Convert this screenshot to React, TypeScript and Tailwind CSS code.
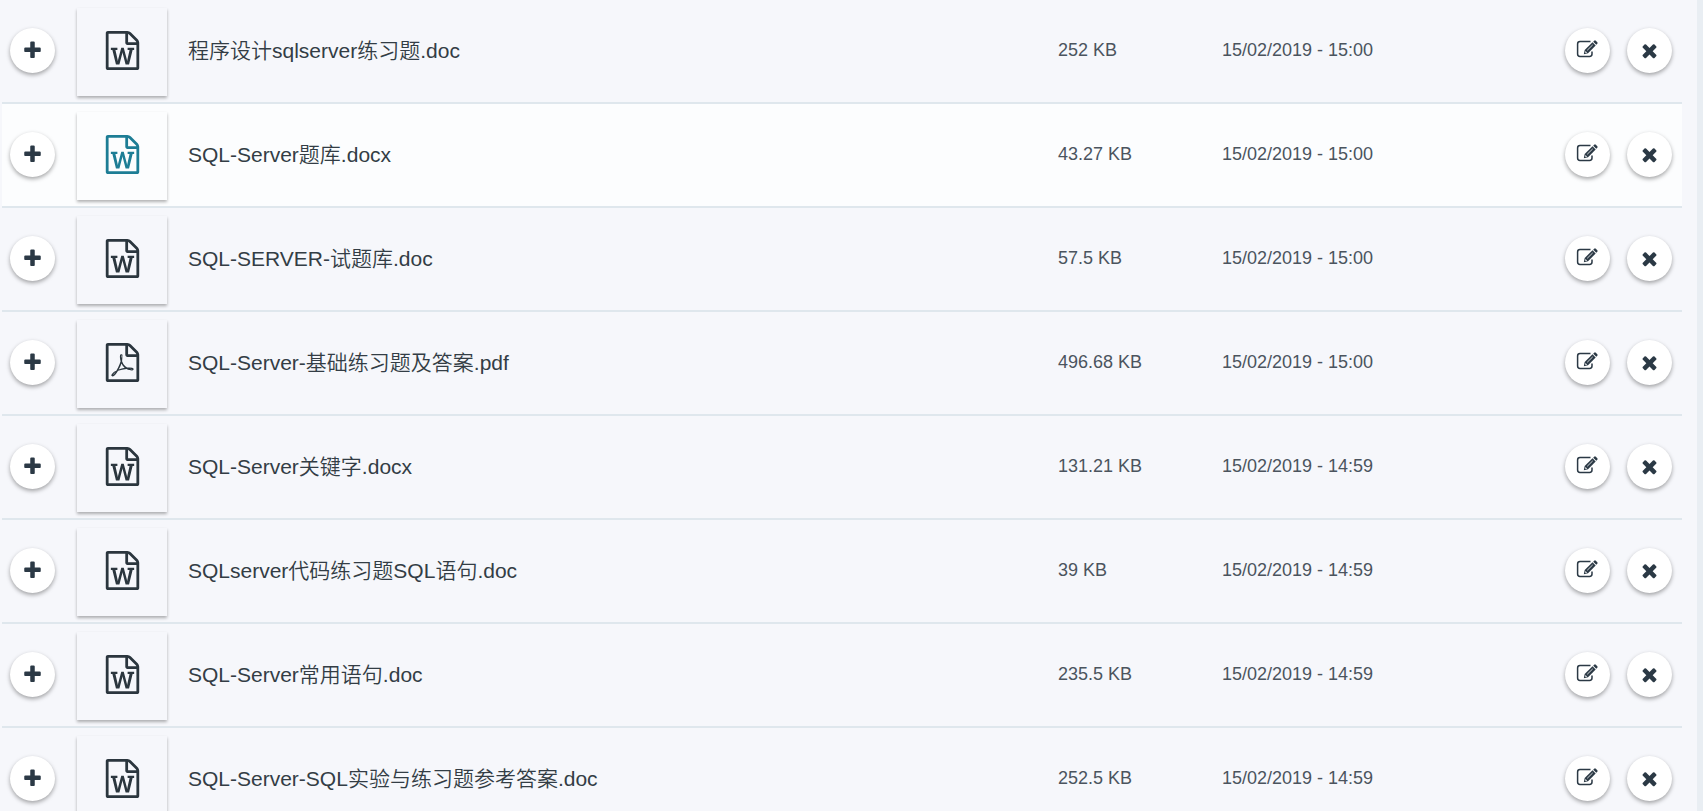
import React from 'react';

interface IFile {
  name: string;
  size: string;
  date: string;
  type: 'word' | 'pdf';
  active?: boolean;
}

const files: IFile[] = [
  { name: '程序设计sqlserver练习题.doc', size: '252 KB', date: '15/02/2019 - 15:00', type: 'word' },
  { name: 'SQL-Server题库.docx', size: '43.27 KB', date: '15/02/2019 - 15:00', type: 'word', active: true },
  { name: 'SQL-SERVER-试题库.doc', size: '57.5 KB', date: '15/02/2019 - 15:00', type: 'word' },
  { name: 'SQL-Server-基础练习题及答案.pdf', size: '496.68 KB', date: '15/02/2019 - 15:00', type: 'pdf' },
  { name: 'SQL-Server关键字.docx', size: '131.21 KB', date: '15/02/2019 - 14:59', type: 'word' },
  { name: 'SQLserver代码练习题SQL语句.doc', size: '39 KB', date: '15/02/2019 - 14:59', type: 'word' },
  { name: 'SQL-Server常用语句.doc', size: '235.5 KB', date: '15/02/2019 - 14:59', type: 'word' },
  { name: 'SQL-Server-SQL实验与练习题参考答案.doc', size: '252.5 KB', date: '15/02/2019 - 14:59', type: 'word' },
];

const PAGE =
  'M1596 380q28 28 48 76t20 88v1152q0 40-28 68t-68 28h-1344q-40 0-68-28t-28-68v-1600q0-40 28-68t68-28h896q40 0 88 20t76 48zm-444-244v376h376q-10-29-22-41l-313-313q-12-12-41-22zm384 1528v-1024h-416q-40 0-68-28t-28-68v-416h-768v1536h1280z';
const WORD_MARK =
  'm-1175-896v107h70l164 661h159l128-485q7-20 10-46 2-16 2-24h4l3 24q1 3 3.500 20t5.500 26l128 485h159l164-661h70v-107h-300v107h90l-99 438q-5 20-7 46l-2 21h-4l-3-21q-1-5-4-21t-5-25l-144-545h-114l-144 545q-2 9-4.500 24.500t-3.500 21.500l-4 21h-4l-2-21q-2-26-7-46l-99-438h90v-107h-300z';
const PDF_MARK =
  'm-514-593q33 26 84 56 59-7 117-7 147 0 177 49 16 22 2 52 0 1-1 2l-2 2v1q-6 38-71 38-48 0-115-20t-130-53q-221 24-392 83-153 262-242 262-15 0-28-7l-24-12q-1-1-6-5-10-10-6-36 9-40 56-91.500t132-96.500q14-9 23 6 2 2 2 4 52-85 107-197 68-136 104-262-24-82-30.500-159.500t6.500-127.500q11-40 42-40h22q23 0 35 15 18 21 9 68-2 6-4 8 1 3 1 8v30q-2 123-14 192 55 164 146 238zm-576 411q52-24 137-158-51 40-87.500 84t-49.500 74zm398-920q-15 42-2 132 1-7 7-44 0-3 7-43 1-4 4-8-1-1-1-2t-1-2-1-2q-1-22-13-36 0 1-1 2v3zm-124 661q135-54 284-81-2-1-13-9.500t-16-13.500q-76-67-127-176-27 86-83 197-30 56-45 83zm646-16q-24-24-140-24 76 28 124 28 14 0 18-1 0-1-2-3z';

const FileIcon: React.FC<{ type: IFile['type'] }> = ({ type }) => (
  <svg viewBox="0 0 1792 1792" className="size-[39px]" fill="currentColor" aria-hidden="true">
    <path d={PAGE + (type === 'pdf' ? PDF_MARK : WORD_MARK)} />
  </svg>
);

const PlusIcon = () => (
  <svg viewBox="0 0 1792 1792" className="size-[21px]" fill="currentColor" aria-hidden="true">
    <path d="M1600 736v192q0 40-28 68t-68 28h-416v416q0 40-28 68t-68 28h-192q-40 0-68-28t-28-68v-416h-416q-40 0-68-28t-28-68v-192q0-40 28-68t68-28h416v-416q0-40 28-68t68-28h192q40 0 68 28t28 68v416h416q40 0 68 28t28 68z" />
  </svg>
);

const CloseIcon = () => (
  <svg viewBox="0 0 1792 1792" className="size-[21px]" fill="currentColor" aria-hidden="true">
    <path d="M1490 1322q0 40-28 68l-136 136q-28 28-68 28t-68-28l-294-294-294 294q-28 28-68 28t-68-28l-136-136q-28-28-28-68t28-68l294-294-294-294q-28-28-28-68t28-68l136-136q28-28 68-28t68 28l294 294 294-294q28-28 68-28t68 28l136 136q28 28 28 68t-28 68l-294 294 294 294q28 28 28 68z" />
  </svg>
);

const EditIcon = () => (
  <svg viewBox="0 0 24 20" className="h-5 w-6" fill="none" aria-hidden="true">
    <path
      d="M14.500 1.600H4Q1.600 1.600 1.600 4V14Q1.600 16.400 4 16.400H13.600Q16 16.400 16 14V11.500"
      stroke="currentColor"
      strokeWidth="1.500"
    />
    <path d="M7.800 14.200L8.700 9.900L16.500 2.300L19.700 5.500L12 13.200Z" fill="currentColor" />
    <path d="M17.200 1.700L18.200.7Q19 0 19.800.7L21.300 2.200Q22 3 21.300 3.800L20.300 4.800Z" fill="currentColor" />
    <path d="M11.200 10.300L16.700 4.900" stroke="white" strokeWidth=".8" />
    <path d="M9.300 11.600L10.500 12.800" stroke="white" strokeWidth="1.200" />
  </svg>
);

interface RoundButtonProps {
  label: string;
  children: React.ReactNode;
}

const RoundButton: React.FC<RoundButtonProps> = ({ label, children }) => (
  <button
    type="button"
    aria-label={label}
    className="flex size-[45px] items-center justify-center rounded-full bg-white text-[#2b3945] shadow-[0_2px_4px_rgba(0,0,0,0.35)]"
  >
    {children}
  </button>
);

const App: React.FC = () => {
  return (
    <main className="h-screen overflow-hidden border-r-6 border-[#e9eef3] bg-[#f6f7fb] pr-[15px] pl-0.5 font-['Liberation_Sans','Noto_Sans_CJK_SC',sans-serif]">
      <table className="w-full table-fixed border-separate border-spacing-0 text-left">
        <colgroup>
          <col className="w-[75px]" />
          <col className="w-[110px]" />
          <col />
          <col className="w-[165px]" />
          <col className="w-[343px]" />
          <col className="w-[117px]" />
        </colgroup>
        <tbody>
          {files.map((file) => (
            <tr
              key={file.name}
              className={
                file.active
                  ? 'h-26 bg-[#fcfdfe] *:border-b-2 *:border-[#dfe7ed]'
                  : 'h-26 *:border-b-2 *:border-[#dfe7ed]'
              }
            >
              <td className="pb-0.5 pl-2">
                <RoundButton label={`Add ${file.name}`}>
                  <PlusIcon />
                </RoundButton>
              </td>
              <td className="pt-0.5">
                <div
                  className={
                    file.active
                      ? 'flex h-[88px] w-[90px] items-center justify-center pb-1 text-[#1d7d95] shadow-[0_2px_3px_rgba(0,0,0,0.3)]'
                      : 'flex h-[88px] w-[90px] items-center justify-center pb-1 text-[#2b363e] shadow-[0_2px_3px_rgba(0,0,0,0.3)]'
                  }
                >
                  <FileIcon type={file.type} />
                </div>
              </td>
              <td className="pl-px text-[21px] font-[350] text-[#333d45]">{file.name}</td>
              <td className="pb-0.5 pl-px text-lg text-[#4b545e]">{file.size}</td>
              <td className="pb-0.5 text-lg text-[#4b545e]">{file.date}</td>
              <td className="pb-0.5">
                <div className="flex gap-[17px]">
                  <RoundButton label={`Edit ${file.name}`}>
                    <EditIcon />
                  </RoundButton>
                  <RoundButton label={`Delete ${file.name}`}>
                    <CloseIcon />
                  </RoundButton>
                </div>
              </td>
            </tr>
          ))}
        </tbody>
      </table>
    </main>
  );
};

export default App;
